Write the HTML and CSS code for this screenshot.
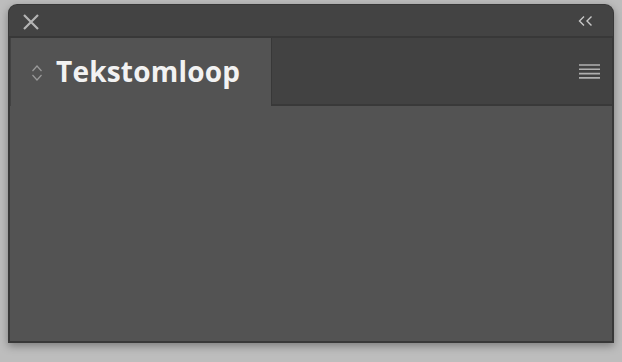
FILE: index.html
```html
<!DOCTYPE html>
<html>
<head>
<meta charset="utf-8">
<link rel="stylesheet" href="styles.css">
</head>
<body>
<div class="panel">
  <div class="titlebar">
    <svg class="close" width="18" height="18" viewBox="0 0 18 18"><path d="M2 2 L16 16 M16 2 L2 16" stroke="#b4b4b4" stroke-width="2.2" fill="none"/></svg>
    <svg class="collapse" width="16" height="12" viewBox="0 0 16 12"><path d="M6 1.5 L1.5 6 L6 10.5 M13.5 1.5 L9 6 L13.5 10.5" stroke="#c8c8c8" stroke-width="1.4" fill="none"/></svg>
  </div>
  <div class="tabrow">
    <div class="tab">
      <svg class="updown" width="12" height="18" viewBox="0 0 12 18"><path d="M1.5 7 L6 2 L10.5 7 M1.5 11 L6 16 L10.5 11" stroke="#9a9a9a" stroke-width="1.2" fill="none"/></svg>
      <span class="tab-title">Tekstomloop</span>
    </div>
    <div class="tab-rest">
      <svg class="menu" width="21" height="15" viewBox="0 0 21 15"><path d="M0 1 H21 M0 5.3 H21 M0 9.6 H21 M0 13.9 H21" stroke="#b0b0b0" stroke-width="1.6"/></svg>
    </div>
  </div>
  <div class="body"></div>
</div>
</body>
</html>
```

FILE: styles.css
```css
html, body { margin: 0; padding: 0; }
body {
  background: #bdbdbd;
  width: 622px;
  height: 362px;
  overflow: hidden;
  font-family: "Open Sans", "DejaVu Sans", sans-serif;
  padding: 4px 8px 0 8px;
  box-sizing: border-box;
}
.panel {
  width: 606px;
  height: 339px;
  box-sizing: border-box;
  background: #383838;
  border-radius: 9px 9px 0 0;
  padding: 0 2px 2px 2px;
  display: flex;
  flex-direction: column;
  box-shadow: 0 3px 8px rgba(0,0,0,0.35);
}
.titlebar {
  height: 31px;
  background: #434343;
  border-radius: 8px 8px 0 0;
  margin: 1px -1px 0 -1px;
  display: flex;
  align-items: center;
  justify-content: space-between;
  padding: 0 19px 0 13px;
  border-bottom: 2px solid #383838;
}
.close { display: block; margin-top: 2px; }
.collapse { display: block; margin-top: 1px; }
.tabrow {
  height: 68px;
  display: flex;
  background: #424242;
  padding-left: 1px;
}
.tab {
  width: 261px;
  background: #535353;
  display: flex;
  align-items: center;
  padding-left: 20px;
  box-sizing: border-box;
  border-right: 1px solid #383838;
}
.updown { display: block; margin-right: 13px; margin-top: 1px; }
.tab-title {
  color: #f2f2f2;
  font-weight: 700;
  font-size: 28px;
  letter-spacing: 0.2px;
  margin-top: -2px;
}
.tab-rest {
  flex: 1;
  display: flex;
  align-items: center;
  justify-content: flex-end;
  padding-right: 12px;
  border-bottom: 2px solid #393939;
}
.menu { display: block; margin-top: 0px; }
.body {
  flex: 1;
  background: #535353;
}
```
